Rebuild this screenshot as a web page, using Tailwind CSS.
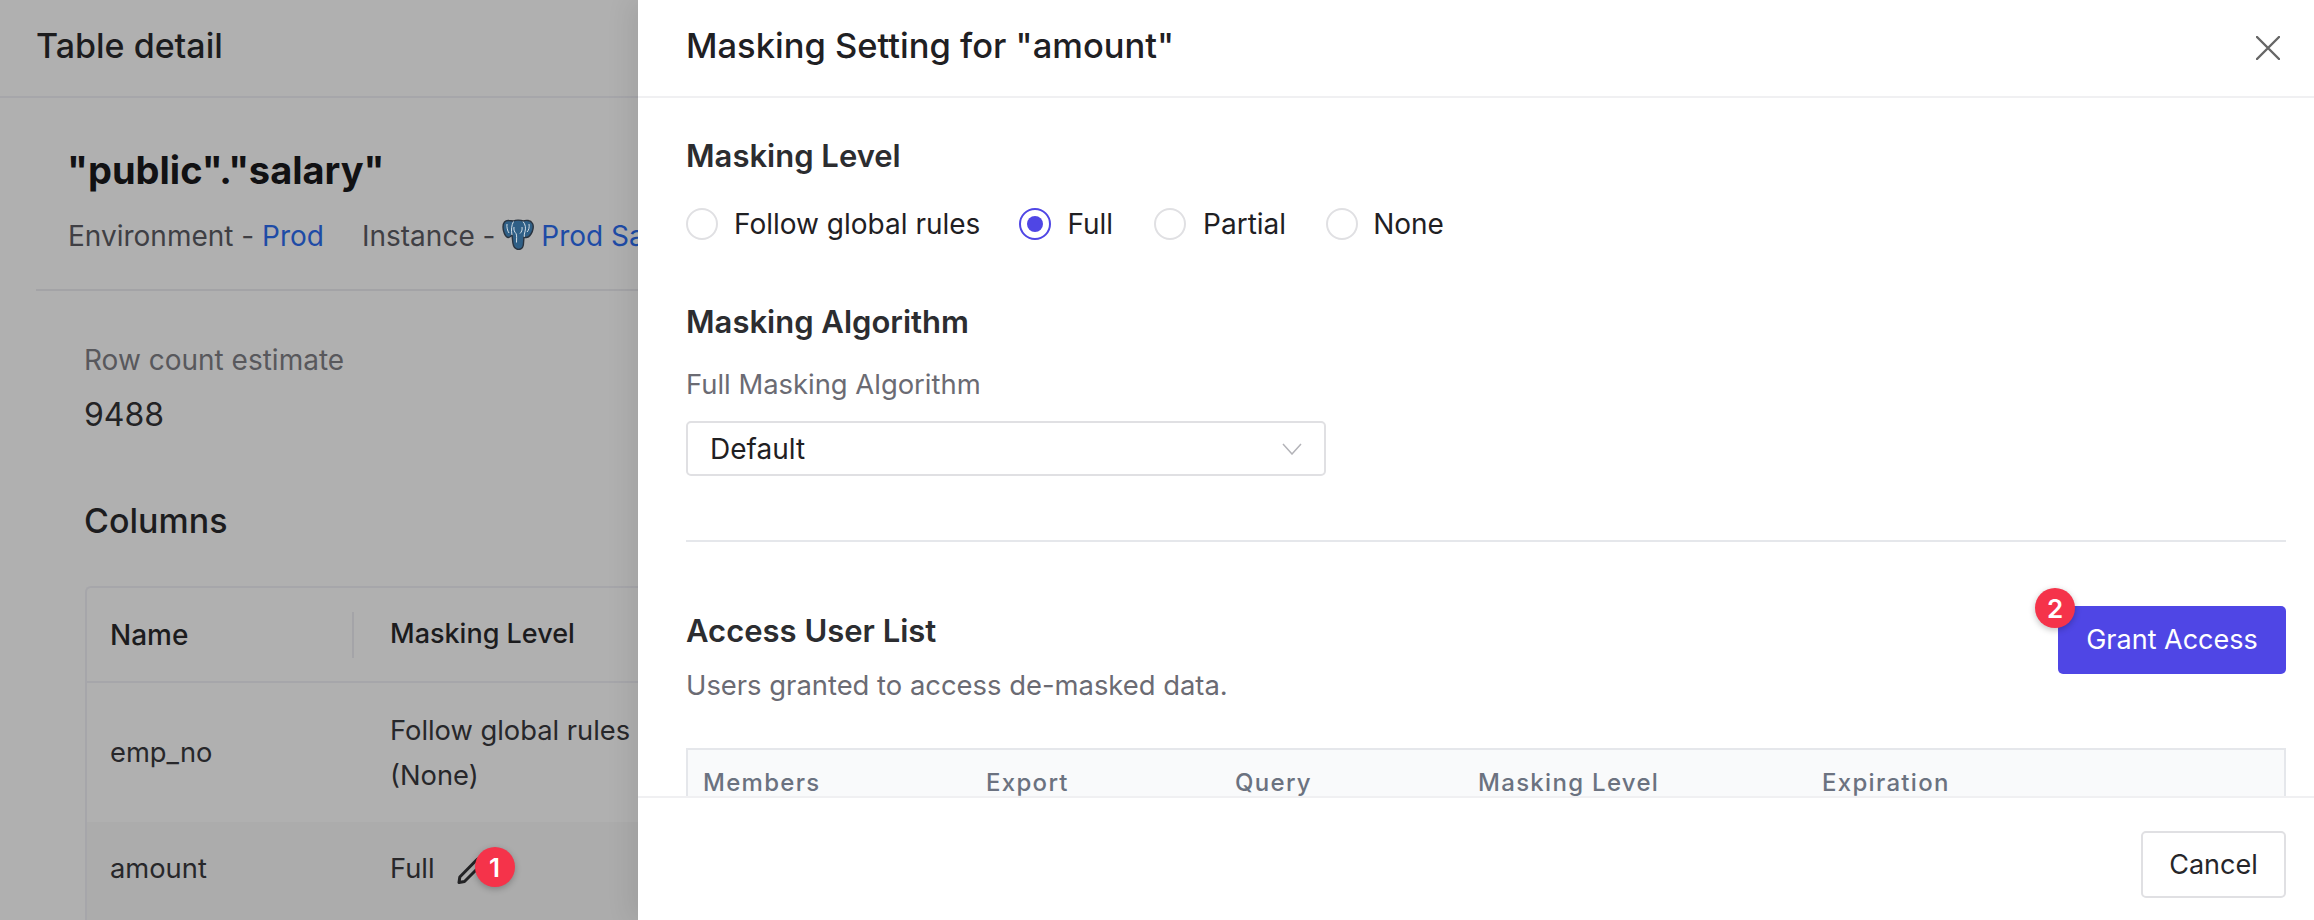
<!DOCTYPE html>
<html lang="en">
<head>
    <meta charset="UTF-8">
    <title>Masking Setting</title>
    <script src="https://cdn.jsdelivr.net/npm/@tailwindcss/browser@4"></script>
</head>
<body class="bg-[#b0b0b0] font-['Inter',sans-serif]">
<div class="flex h-[920px] w-[2314px] overflow-hidden">

    <!-- Table detail page behind the drawer -->
    <div class="w-[638px] h-full shrink-0 overflow-hidden bg-[#b0b0b0] text-[#1c1c1e]">
        <div class="h-[98px] border-b-2 border-[#a6a6aa] pl-[36px] pb-[6px] flex items-center text-[34px] font-medium">Table detail</div>

        <div class="ml-[67px] mt-[48px] h-[48px] leading-[48px] text-[38px] font-bold text-[#111113] whitespace-nowrap">"public"."salary"</div>
        <div class="ml-[68px] mt-[22px] h-[40px] leading-[40px] text-[28px] text-[#3f3f44] flex items-center whitespace-nowrap">
            <span>Environment -&nbsp;</span><span class="text-[#1e4ba6]">Prod</span>
            <span class="ml-[38px]">Instance -&nbsp;</span>
            <svg class="w-[32px] h-[32px] shrink-0 -ml-[1px] -mt-[2px]" viewBox="0 0 32 32">
                <path d="M7 1.500C3 1 1 4 1 8c0 4 2 10 5 10.500 2 .3 3-1.500 4-2.500.5 3 .5 8 1.500 10.500 1 3.500 4.500 4.500 7 3.500 2.500-1 3-3.500 3-6l.5-6c2 1 5 0 7-3s3-8 1.500-10.500C28.500 1 24 1 21 2c-2-1-7-1.400-9.500 0-1.500-.2-3-.4-4.500-.5z" fill="#2f5f86" stroke="#2a3440" stroke-width="1.400"/>
                <path d="M11.500 2.500C9.500 6 9 11 10 16M12 8c-.5 3 .5 5 2 6.500 1 1.500.5 6 .5 9M21 2.500c2.500 3 3 6.500 2 10-.6 1.800-.8 3.500-.8 5.500M20 8c.5 3-.5 5-2 6.500M5 5c-.5 3 .5 7 2 9M27 5c.5 3 0 6-2 8" fill="none" stroke="#d5dfe7" stroke-width="1"/>
            </svg>
            <span class="ml-[7px] text-[#1e4ba6]">Prod Sample Instance</span>
        </div>
        <div class="ml-[36px] mt-[33px] h-[2px] bg-[#a3a3a6]"></div>

        <div class="ml-[84px] mt-[49px] h-[40px] leading-[40px] text-[28px] text-[#58585c]">Row count estimate</div>
        <div class="ml-[84px] mt-[15px] h-[40px] leading-[40px] text-[32px] text-[#232325]">9488</div>
        <div class="ml-[84px] mt-[64px] h-[44px] leading-[44px] text-[34px] font-medium">Columns</div>

        <div class="ml-[85px] mt-[43px] w-[640px] h-[400px] border-l-2 border-t-2 border-[#a6a6aa] rounded-tl-[6px]">
            <div class="flex h-[95px] items-center border-b-2 border-[#a6a6aa] text-[27px] font-medium">
                <div class="w-[265px] pl-[23px] text-[28px]">Name</div>
                <div class="w-[2px] h-[46px] bg-[#a4a4a8]"></div>
                <div class="pl-[36px]">Masking Level</div>
            </div>
            <div class="flex h-[139px] items-center text-[27.300px] text-[#27272a]">
                <div class="w-[303px] pl-[23px] pt-[2px]">emp_no</div>
                <div class="leading-[45px] whitespace-nowrap">Follow global rules<br>(None)</div>
            </div>
            <div class="flex h-[100px] pb-[6px] items-center text-[27.300px] text-[#27272a] bg-[#acacac]">
                <div class="w-[303px] pl-[23px]">amount</div>
                <div>Full</div>
                <div class="relative ml-[22px] w-[30px] h-[30px] mt-[2px]">
                    <svg class="w-[30px] h-[30px]" viewBox="0 0 30 30" fill="none" stroke="#232325" stroke-width="3" stroke-linejoin="round">
                        <path d="M2 27.500l.8-5.500L20 4.500a3.200 3.200 0 0 1 5 4.500L7.500 26.500z"/>
                    </svg>
                    <div class="absolute left-[18px] top-[-8px] w-[40px] h-[40px] rounded-full bg-[#f5334a] text-white text-[26px] font-semibold flex items-center justify-center shadow-[0_2px_6px_rgba(0,0,0,0.25)]">1</div>
                </div>
            </div>
        </div>
    </div>

    <!-- Drawer -->
    <div class="flex-1 h-full flex flex-col bg-white text-[#26262a] shadow-[-8px_0_24px_rgba(0,0,0,0.08)] relative">
        <div class="h-[98px] shrink-0 border-b-2 border-[#f0f0f2] pl-[48px] pr-[34px] pb-[4px] flex items-center justify-between">
            <span class="text-[34.500px] font-medium text-[#1f2023]">Masking Setting for "amount"</span>
            <svg class="w-[24px] h-[24px] mt-[3px]" viewBox="0 0 24 24" fill="none" stroke="#666" stroke-width="2.400" stroke-linecap="round"><path d="M1 1l22 22M23 1L1 23"/></svg>
        </div>

        <div class="flex-1 overflow-hidden pl-[48px] pr-[28px]">
            <div class="mt-[36px] h-[44px] leading-[44px] text-[31px] font-semibold text-[#2c2d30]">Masking Level</div>
            <div class="mt-[26px] h-[40px] flex items-center text-[28px] text-[#1f2023]">
                <div class="w-[32px] h-[32px] rounded-full border-2 border-[#e0e0e3]"></div>
                <span class="ml-[16px]">Follow global rules</span>
                <div class="ml-[39px] w-[32px] h-[32px] rounded-full border-2 border-[#4f46e5] flex items-center justify-center">
                    <div class="w-[16px] h-[16px] rounded-full bg-[#4f46e5]"></div>
                </div>
                <span class="ml-[16px]">Full</span>
                <div class="ml-[41px] w-[32px] h-[32px] rounded-full border-2 border-[#e0e0e3]"></div>
                <span class="ml-[17px]">Partial</span>
                <div class="ml-[40px] w-[32px] h-[32px] rounded-full border-2 border-[#e0e0e3]"></div>
                <span class="ml-[15px]">None</span>
            </div>

            <div class="mt-[56px] h-[44px] leading-[44px] text-[31px] font-semibold text-[#2c2d30]">Masking Algorithm</div>
            <div class="mt-[20px] h-[40px] leading-[40px] text-[27.400px] text-[#6b6b73]">Full Masking Algorithm</div>
            <div class="mt-[17px] w-[640px] h-[55px] border-2 border-[#e0e0e3] rounded-[5px] pl-[22px] pr-[22px] flex items-center justify-between text-[28px] text-[#1f2023]">
                <span>Default</span>
                <svg class="w-[20px] h-[12px]" viewBox="0 0 20 12" fill="none" stroke="#b3b3b8" stroke-width="1.500"><path d="M1 1l9 10 9-10"/></svg>
            </div>

            <div class="mt-[64px] h-[2px] bg-[#e5e7eb]"></div>

            <div class="mt-[64px] flex items-start justify-between">
                <div class="pt-[3px]">
                    <div class="h-[44px] leading-[44px] text-[31px] font-semibold text-[#2c2d30]">Access User List</div>
                    <div class="mt-[12px] h-[40px] leading-[40px] text-[27.400px] text-[#6b6b73]">Users granted to access de-masked data.</div>
                </div>
                <div class="relative w-[228px] h-[68px] rounded-[5px] bg-[#4f46e5] text-white text-[27px] flex items-center justify-center">
                    Grant Access
                    <div class="absolute left-[-23px] top-[-18px] w-[40px] h-[40px] rounded-full bg-[#f5334a] text-[26px] font-semibold flex items-center justify-center shadow-[0_2px_6px_rgba(0,0,0,0.25)]">2</div>
                </div>
            </div>

            <div class="mt-[43px] h-[90px] border-2 border-[#e5e7eb] bg-[#f9fafb] flex pt-[15px] text-[24px] font-medium tracking-[1.300px] text-[#6b7280]">
                <div class="ml-[15px] w-[283px]">Members</div>
                <div class="w-[249px]">Export</div>
                <div class="w-[243px]">Query</div>
                <div class="w-[344px]">Masking Level</div>
                <div>Expiration</div>
            </div>
        </div>

        <div class="h-[124px] shrink-0 border-t-2 border-[#f0f0f2] pr-[28px] flex justify-end pt-[33px] bg-white">
            <div class="w-[145px] h-[67px] border-2 border-[#e0e0e3] rounded-[5px] pt-[2px] flex items-center justify-center text-[27px] text-[#26262a]">Cancel</div>
        </div>
    </div>
</div>
</body>
</html>
